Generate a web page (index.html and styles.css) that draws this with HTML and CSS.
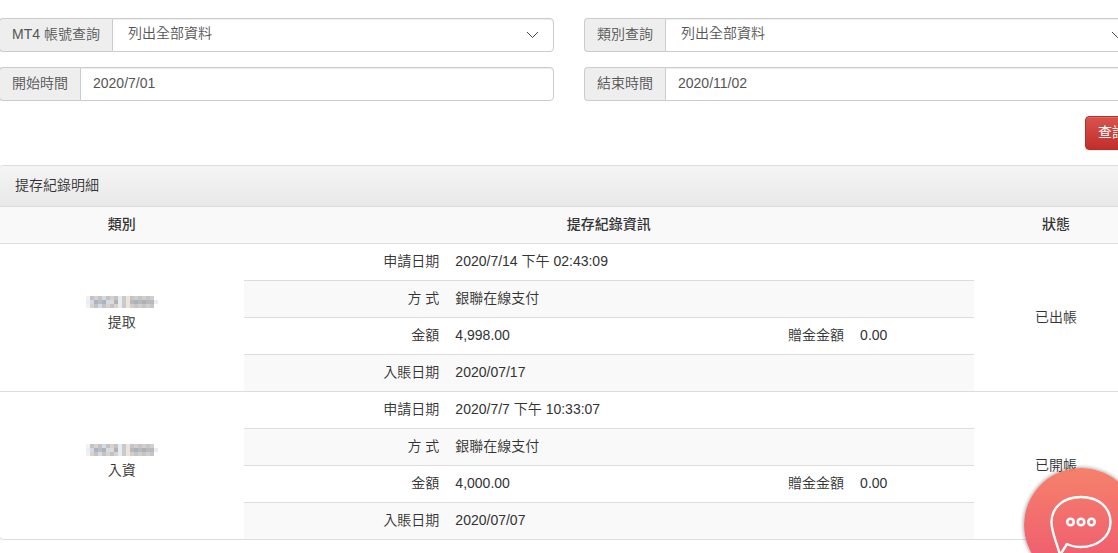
FILE: index.html
```html
<!DOCTYPE html>
<html lang="zh-Hant">

<head>
  <meta charset="UTF-8">
  <meta name="viewport" content="width=device-width, initial-scale=1">
  <title>提存紀錄</title>
  <link rel="stylesheet" href="styles.css">
</head>

<body>
  <!-- Mosaic over the account number -->
  <svg class="defs" width="0" height="0" aria-hidden="true">
    <symbol id="masked" viewBox="0 0 72 12">
      <g fill="#f3f1ef"><path d="M0 0h4v4H0z" /><path d="M0 8h4v4H0z" /></g>
      <path fill="#e9eef2" d="M0 4h4v4H0zM68 4h4v4h-4z" />
      <path fill="#c4c2c4" d="M4 0h4v4H4zM12 0h4v4h-4zM20 0h4v4h-4zM28 0h4v4h-4zM8 8h4v4H8zM16 8h4v4h-4zM24 8h4v4h-4z" />
      <path fill="#d8d2cc" d="M8 0h4v4H8zM24 0h4v4h-4zM4 8h4v4H4zM20 8h4v4h-4zM28 8h4v4h-4z" />
      <path fill="#d3dce6" d="M16 0h4v4h-4zM4 4h4v4H4zM20 4h4v4h-4zM12 8h4v4h-4z" />
      <path fill="#b3b1b3" d="M8 4h4v4H8zM16 4h4v4h-4zM28 4h4v4h-4z" />
      <path fill="#b2bfcf" d="M12 4h4v4h-4z" />
      <path fill="#d9dadc" d="M24 4h4v4h-4z" />
      <path fill="#e6edf1" d="M32 0h4v12h-4z" />
      <path fill="#c9c8ca" d="M36 0h4v12h-4z" />
      <path fill="#eee3da" d="M40 0h4v12h-4z" />
      <path fill="#c6c4c6" d="M44 0h4v4h-4zM52 0h4v4h-4zM60 0h4v4h-4zM48 8h4v4h-4zM56 8h4v4h-4zM64 8h4v4h-4z" />
      <path fill="#d2cecb" d="M48 0h4v4h-4zM56 0h4v4h-4zM64 0h4v4h-4zM44 8h4v4h-4zM52 8h4v4h-4zM60 8h4v4h-4z" />
      <path fill="#a9b1bb" d="M48 4h4v4h-4zM56 4h4v4h-4z" />
      <path fill="#bab8b9" d="M44 4h4v4h-4zM52 4h4v4h-4zM60 4h8v4h-8z" />
    </symbol>
    <symbol id="chevron" viewBox="0 0 13 8">
      <path d="M1 1l5.500 5.500L12 1" fill="none" stroke="#444" />
    </symbol>
  </svg>

  <main class="page">
    <form class="search_form">
      <div class="input_group">
        <label class="addon" for="account">MT4 帳號查詢</label>
        <div class="select_wrap">
          <select id="account" class="form_control">
            <option>列出全部資料</option>
          </select>
          <svg class="chevron"><use href="#chevron" /></svg>
        </div>
      </div>
      <div class="input_group">
        <label class="addon" for="category">類別查詢</label>
        <div class="select_wrap">
          <select id="category" class="form_control">
            <option>列出全部資料</option>
          </select>
          <svg class="chevron"><use href="#chevron" /></svg>
        </div>
      </div>
      <div class="input_group">
        <label class="addon" for="start">開始時間</label>
        <input id="start" class="form_control" type="text" value="2020/7/01">
      </div>
      <div class="input_group">
        <label class="addon" for="end">結束時間</label>
        <input id="end" class="form_control" type="text" value="2020/11/02">
      </div>
      <button class="btn_search" type="button">查詢</button>
    </form>

    <section class="panel">
      <div class="panel_heading">提存紀錄明細</div>
      <table class="record_table">
        <colgroup>
          <col class="col_type">
          <col class="col_info">
          <col class="col_status">
        </colgroup>
        <thead>
          <tr>
            <th>類別</th>
            <th>提存紀錄資訊</th>
            <th>狀態</th>
          </tr>
        </thead>
        <tbody>
          <tr>
            <td class="type">
              <svg class="masked"><use href="#masked" /></svg>
              <div>提取</div>
            </td>
            <td class="info">
              <table class="detail_table">
                <colgroup>
                  <col class="col_label">
                  <col class="col_value">
                  <col class="col_label2">
                  <col>
                </colgroup>
                <tr>
                  <th>申請日期</th>
                  <td colspan="3">2020/7/14 下午 02:43:09</td>
                </tr>
                <tr>
                  <th>方 式</th>
                  <td colspan="3">銀聯在線支付</td>
                </tr>
                <tr>
                  <th>金額</th>
                  <td>4,998.00</td>
                  <th>贈金金額</th>
                  <td>0.00</td>
                </tr>
                <tr>
                  <th>入賬日期</th>
                  <td colspan="3">2020/07/17</td>
                </tr>
              </table>
            </td>
            <td class="status">已出帳</td>
          </tr>
          <tr>
            <td class="type">
              <svg class="masked"><use href="#masked" /></svg>
              <div>入資</div>
            </td>
            <td class="info">
              <table class="detail_table">
                <colgroup>
                  <col class="col_label">
                  <col class="col_value">
                  <col class="col_label2">
                  <col>
                </colgroup>
                <tr>
                  <th>申請日期</th>
                  <td colspan="3">2020/7/7 下午 10:33:07</td>
                </tr>
                <tr>
                  <th>方 式</th>
                  <td colspan="3">銀聯在線支付</td>
                </tr>
                <tr>
                  <th>金額</th>
                  <td>4,000.00</td>
                  <th>贈金金額</th>
                  <td>0.00</td>
                </tr>
                <tr>
                  <th>入賬日期</th>
                  <td colspan="3">2020/07/07</td>
                </tr>
              </table>
            </td>
            <td class="status">已開帳</td>
          </tr>
        </tbody>
      </table>
    </section>
  </main>

  <button class="chat_btn" type="button" aria-label="Chat">
    <svg viewBox="0 0 114 114" fill="none" stroke="#fff">
      <path d="M36 87C32 72 27.500 64 27.500 54C27.500 39 40 29 57 29S86.500 39 86.500 54S73 79 57 79C52 79 47 78 43 76Z" stroke-width="2.400" stroke-linejoin="round" />
      <g stroke-width="2.600">
        <circle cx="46.500" cy="54" r="3.300" />
        <circle cx="57" cy="54" r="3.300" />
        <circle cx="67.500" cy="54" r="3.300" />
      </g>
    </svg>
  </button>
</body>

</html>
```
FILE: styles.css
```css
* {
  box-sizing: border-box;
}

body {
  margin: 0;
  overflow: hidden;
  background: #fff;
  color: #333;
  font-family: "Liberation Sans", "Noto Sans CJK TC", sans-serif;
  font-size: 14px;
  font-weight: 350;
  line-height: 20px;
}

input,
select,
button {
  margin: 0;
  font: inherit;
}

.defs {
  position: absolute;
}

/* The content runs a little past the right edge of the window */
.page {
  margin: 0 -21px 0 -1px;
  padding-top: 18px;
}

.search_form {
  display: grid;
  grid-template-columns: 1fr 1fr;
  gap: 15px 30px;
  margin-bottom: 15px;
}

.input_group {
  display: flex;
  height: 34px;
}

.addon {
  padding: 5px 12px;
  border: 1px solid #ccc;
  border-right: 0;
  border-radius: 4px 0 0 4px;
  background: #eee;
  color: #555;
  white-space: nowrap;
}

.form_control {
  flex: 1;
  min-width: 0;
  width: 100%;
  height: 34px;
  padding: 5px 12px 7px;
  border: 1px solid #ccc;
  border-radius: 0 4px 4px 0;
  background: #fff;
  box-shadow: inset 0 1px 1px rgba(0, 0, 0, 0.075);
  color: #555;
}

.select_wrap {
  position: relative;
  flex: 1;
}

select.form_control {
  display: block;
  appearance: none;
  padding: 4px 32px 8px 15px;
}

.chevron {
  position: absolute;
  top: 13px;
  right: 15px;
  width: 13px;
  height: 8px;
  pointer-events: none;
}

.btn_search {
  grid-column: 2;
  justify-self: end;
  height: 34px;
  padding: 5px 12px 7px;
  border: 1px solid #b92c28;
  border-radius: 4px;
  background: linear-gradient(#d9534f, #c12e2a);
  box-shadow: inset 0 1px 0 rgba(255, 255, 255, 0.15), 0 1px 1px rgba(0, 0, 0, 0.075);
  color: #fff;
  font-weight: 400;
  cursor: pointer;
}

.panel {
  border: 1px solid #ddd;
  border-radius: 4px;
  box-shadow: 0 1px 2px rgba(0, 0, 0, 0.05);
}

.panel_heading {
  padding: 9px 15px 11px;
  border-bottom: 1px solid #ddd;
  border-radius: 3px 3px 0 0;
  background: linear-gradient(#f5f5f5, #e8e8e8);
}

table {
  width: 100%;
  border-collapse: collapse;
  table-layout: fixed;
}

.col_type {
  width: 21.4%;
}

.col_status {
  width: 14.4%;
}

.record_table thead tr {
  background: #f9f9f9;
}

.record_table thead th {
  padding: 7px 8px 9px;
  font-weight: 500;
}

.record_table > tbody > tr > td {
  padding: 0;
  border-top: 1px solid #ddd;
  text-align: center;
}

.record_table > tbody > tr > .type {
  padding-bottom: 8px;
}

.record_table > tbody > tr > .status {
  padding-bottom: 2px;
}

.masked {
  display: block;
  width: 72px;
  height: 12px;
  margin: 0 auto 4px;
}

.detail_table th,
.detail_table td {
  padding: 7px 8px 9px;
  text-align: left;
  font-weight: inherit;
}

.detail_table th {
  text-align: right;
}

.detail_table tr + tr {
  border-top: 1px solid #ddd;
}

.detail_table tr:nth-child(even) {
  background: #f9f9f9;
}

.col_label {
  width: 27.9%;
}

.col_value {
  width: 40%;
}

.col_label2 {
  width: 15.4%;
}

.chat_btn {
  position: fixed;
  right: -20px;
  bottom: -29px;
  width: 114px;
  height: 114px;
  padding: 0;
  border: 0;
  border-radius: 50%;
  background: linear-gradient(#f67b64, #ef5668 80%);
  box-shadow: 0 0 4px rgba(0, 0, 0, 0.5);
  cursor: pointer;
  opacity: 0.95;
}

.chat_btn svg {
  display: block;
  width: 100%;
  height: 100%;
}
```
